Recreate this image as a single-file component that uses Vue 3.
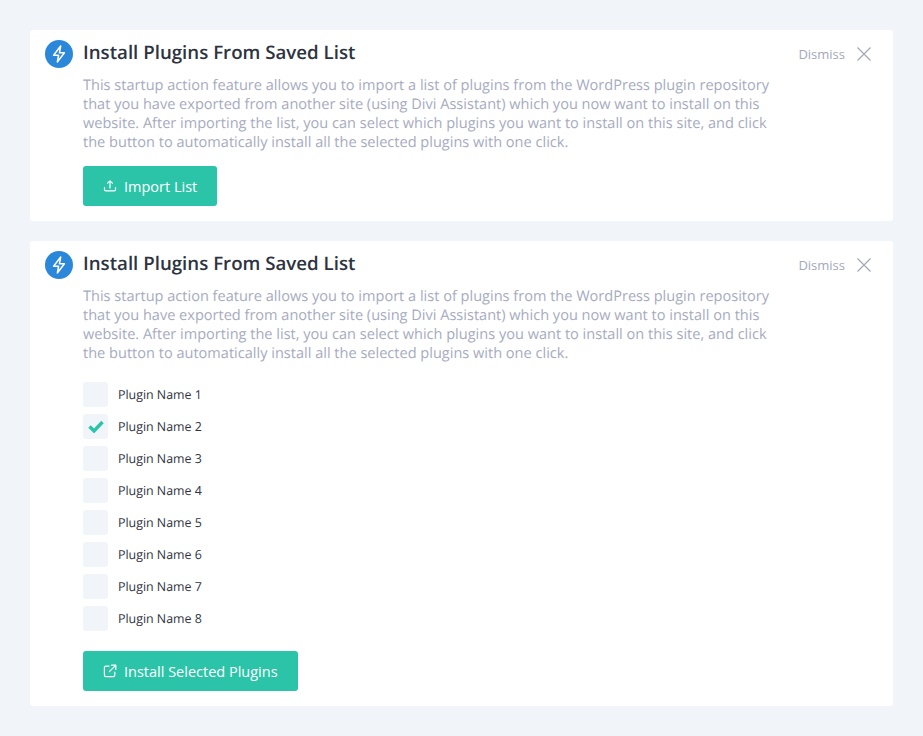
<script setup>
const description = 'This startup action feature allows you to import a list of plugins from the WordPress plugin repository that you have exported from another site (using Divi Assistant) which you now want to install on this website. After importing the list, you can select which plugins you want to install on this site, and click the button to automatically install all the selected plugins with one click.'

const plugins = [
  { name: 'Plugin Name 1', checked: false },
  { name: 'Plugin Name 2', checked: true },
  { name: 'Plugin Name 3', checked: false },
  { name: 'Plugin Name 4', checked: false },
  { name: 'Plugin Name 5', checked: false },
  { name: 'Plugin Name 6', checked: false },
  { name: 'Plugin Name 7', checked: false },
  { name: 'Plugin Name 8', checked: false }
]
</script>

<template>
  <div class="page">
    <section class="card first">
      <div class="badge">
        <svg width="20" height="20" viewBox="0 0 24 24" fill="none" stroke="#fff" stroke-width="1.8" stroke-linejoin="round" stroke-linecap="round">
          <path d="M14 2.5 5.5 13.5h6L10 21.5l8.5-11h-6z" />
        </svg>
      </div>
      <div class="body">
        <div class="head">
          <h2>Install Plugins From Saved List</h2>
          <button class="dismiss" type="button">
            <span>Dismiss</span>
            <svg width="16" height="16" viewBox="0 0 16 16" stroke="#a3a8b8" stroke-width="1.2" fill="none">
              <path d="M1.5 1.5l13 13M14.5 1.5l-13 13" />
            </svg>
          </button>
        </div>
        <p>{{ description }}</p>
        <button class="action" type="button">
          <svg width="14" height="14" viewBox="0 0 14 14" fill="none" stroke="#fff" stroke-width="1.2" stroke-linecap="round" stroke-linejoin="round">
            <path d="M7 9V2M4.6 4.2 7 1.8l2.4 2.4M1.5 8.5v2.2c0 .7.5 1.2 1.2 1.2h8.6c.7 0 1.2-.5 1.2-1.2V8.5" />
          </svg>
          Import List
        </button>
      </div>
    </section>

    <section class="card second">
      <div class="badge">
        <svg width="20" height="20" viewBox="0 0 24 24" fill="none" stroke="#fff" stroke-width="1.8" stroke-linejoin="round" stroke-linecap="round">
          <path d="M14 2.5 5.5 13.5h6L10 21.5l8.5-11h-6z" />
        </svg>
      </div>
      <div class="body">
        <div class="head">
          <h2>Install Plugins From Saved List</h2>
          <button class="dismiss" type="button">
            <span>Dismiss</span>
            <svg width="16" height="16" viewBox="0 0 16 16" stroke="#a3a8b8" stroke-width="1.2" fill="none">
              <path d="M1.5 1.5l13 13M14.5 1.5l-13 13" />
            </svg>
          </button>
        </div>
        <p>{{ description }}</p>
        <ul class="plugins">
          <li v-for="plugin in plugins" :key="plugin.name">
            <span class="box">
              <svg v-if="plugin.checked" width="16" height="13" viewBox="0 0 16 13" fill="none" stroke="#2bc4a8" stroke-width="3.4">
                <path d="M1.5 6.5 6 11l8.5-9" />
              </svg>
            </span>
            {{ plugin.name }}
          </li>
        </ul>
        <button class="action" type="button">
          <svg width="14" height="14" viewBox="0 0 14 14" fill="none" stroke="#fff" stroke-width="1.2" stroke-linecap="round" stroke-linejoin="round">
            <path d="M6 2.2H3c-1 0-1.6.6-1.6 1.6V11c0 1 .6 1.6 1.6 1.6h7.2c1 0 1.6-.6 1.6-1.6V8M8.6 1.2h4.2v4.2M12.6 1.4 6.4 7.6" />
          </svg>
          Install Selected Plugins
        </button>
      </div>
    </section>
  </div>
</template>

<style>
html,
body {
  margin: 0;
  background: #f1f5f9;
}
</style>

<style scoped>
.page {
  width: 923px;
  height: 736px;
  box-sizing: border-box;
  padding: 30px;
  display: flex;
  flex-direction: column;
  gap: 20px;
  font-family: 'Open Sans', sans-serif;
  text-rendering: geometricPrecision;
}
.card {
  display: flex;
  gap: 10px;
  background: #fff;
  border-radius: 3px;
  padding: 10px 21px 15px 15px;
}
.badge {
  flex: none;
  width: 28px;
  height: 28px;
  border-radius: 50%;
  background: #2b87da;
  display: flex;
  align-items: center;
  justify-content: center;
}
.body {
  flex: 1;
}
.head {
  display: flex;
  justify-content: space-between;
  align-items: center;
  height: 28px;
}
h2 {
  margin: 0 0 3px;
  font-size: 18.7px;
  font-weight: 600;
  color: #2d3340;
}
.dismiss {
  display: flex;
  align-items: center;
  gap: 11px;
  border: 0;
  padding: 0;
  background: none;
  font: inherit;
  font-size: 13px;
  color: #a3a8b8;
}
p {
  margin: 8px 0 0;
  max-width: 700px;
  font-size: 14.55px;
  font-weight: 500;
  line-height: 19px;
  color: #a6abbe;
}
.action {
  display: inline-flex;
  align-items: center;
  justify-content: center;
  gap: 7px;
  height: 40px;
  padding: 0 20px;
  border: 0;
  border-radius: 3px;
  background: #2bc4a8;
  color: #fff;
  font: inherit;
  font-size: 14.5px;
  font-weight: 500;
}
.first .action {
  margin-top: 14px;
}
.plugins {
  list-style: none;
  margin: 19px 0 20px;
  padding: 0;
  display: flex;
  flex-direction: column;
  gap: 7px;
}
.plugins li {
  display: flex;
  align-items: center;
  gap: 10px;
  font-size: 12.4px;
  font-weight: 500;
  color: #2d3340;
}
.box {
  width: 25px;
  height: 25px;
  border-radius: 3px;
  background: #f1f5f9;
  display: flex;
  align-items: center;
  justify-content: center;
}
</style>
